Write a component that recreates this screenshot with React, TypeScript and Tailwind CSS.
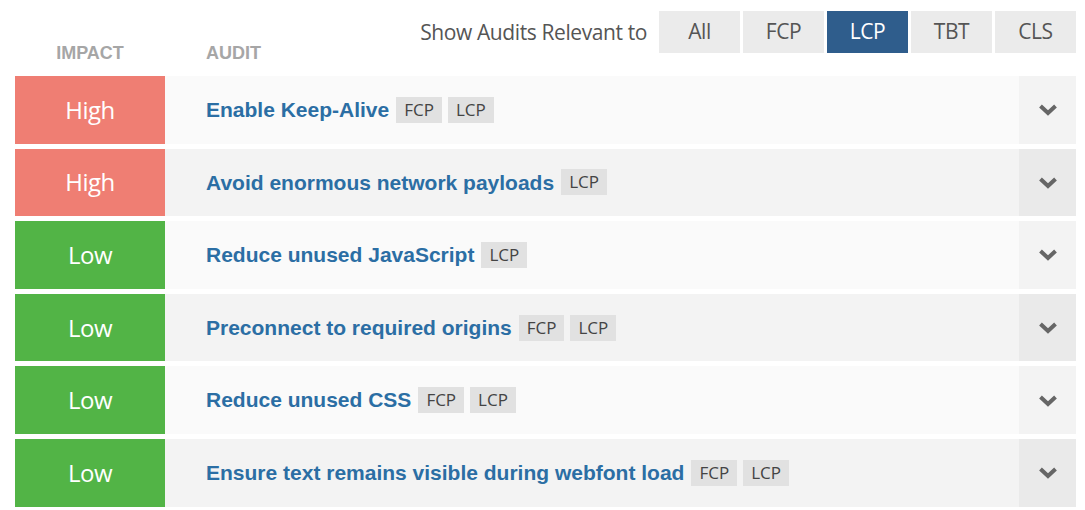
import React, { useState } from 'react';

type Audit = {
  impact: 'High' | 'Low';
  title: string;
  tags: string[];
};

const audits: Audit[] = [
  { impact: 'High', title: 'Enable Keep-Alive', tags: ['FCP', 'LCP'] },
  { impact: 'High', title: 'Avoid enormous network payloads', tags: ['LCP'] },
  { impact: 'Low', title: 'Reduce unused JavaScript', tags: ['LCP'] },
  { impact: 'Low', title: 'Preconnect to required origins', tags: ['FCP', 'LCP'] },
  { impact: 'Low', title: 'Reduce unused CSS', tags: ['FCP', 'LCP'] },
  { impact: 'Low', title: 'Ensure text remains visible during webfont load', tags: ['FCP', 'LCP'] },
];

const filters = ['All', 'FCP', 'LCP', 'TBT', 'CLS'];

function Chevron() {
  return (
    <svg width="20" height="13" viewBox="0 0 20 13" fill="none">
      <path d="M2.5 3 L10 10 L17.5 3" stroke="#666666" strokeWidth="4" strokeLinejoin="miter" />
    </svg>
  );
}

export default function App() {
  const [active, setActive] = useState('LCP');

  return (
    <div className="w-[1085px] h-[510px] bg-white pl-[15px] pr-[9px] overflow-hidden" style={{ fontFamily: '"Open Sans", sans-serif' }}>
      {/* Header */}
      <div className="h-[76px] flex justify-between">
        <div className="flex pt-[43px] font-['Liberation_Sans',sans-serif] font-bold text-[18px] text-[#a6a6a6] leading-[20px]">
          <div className="w-[150px] text-center">IMPACT</div>
          <div className="pl-[41px]">AUDIT</div>
        </div>
        <div className="flex items-start pt-[11px]">
          <span className="text-[21px] text-[#555555] leading-[42px] mr-[12px] tracking-[-0.4px]">Show Audits Relevant to</span>
          <div className="flex gap-[3px]">
            {filters.map(f => (
              <button
                key={f}
                onClick={() => setActive(f)}
                className={`w-[81px] h-[42px] text-[21px] tracking-[-0.4px] ${active === f ? 'bg-[#2f5d8c] text-white' : 'bg-[#ebebeb] text-[#555555]'}`}
              >
                {f}
              </button>
            ))}
          </div>
        </div>
      </div>

      {/* Rows */}
      <div className="flex flex-col gap-[5px]">
        {audits.map((a, i) => (
          <div key={a.title} className={`flex h-[67.6px] ${i % 2 === 0 ? 'bg-[#fafafa]' : 'bg-[#f3f3f3]'}`}>
            <div className={`w-[150px] flex items-center justify-center text-white text-[24px] tracking-[-0.5px] ${a.impact === 'High' ? 'bg-[#ef7e73]' : 'bg-[#52b446]'}`}>
              {a.impact}
            </div>
            <div className="flex-1 flex items-center pl-[41px]">
              <span className="font-['Liberation_Sans',sans-serif] font-bold text-[21px] text-[#2b6ea4] mr-[7px]">{a.title}</span>
              <div className="flex gap-[6px]">
                {a.tags.map(t => (
                  <span key={t} className="h-[26px] px-[8px] bg-[#e1e1e1] text-[#444444] text-[17px] leading-[26px]">{t}</span>
                ))}
              </div>
            </div>
            <div className={`w-[57px] flex items-center justify-center ${i % 2 === 0 ? 'bg-[#f3f3f3]' : 'bg-[#eaeaea]'}`}>
              <Chevron />
            </div>
          </div>
        ))}
      </div>
    </div>
  );
}
